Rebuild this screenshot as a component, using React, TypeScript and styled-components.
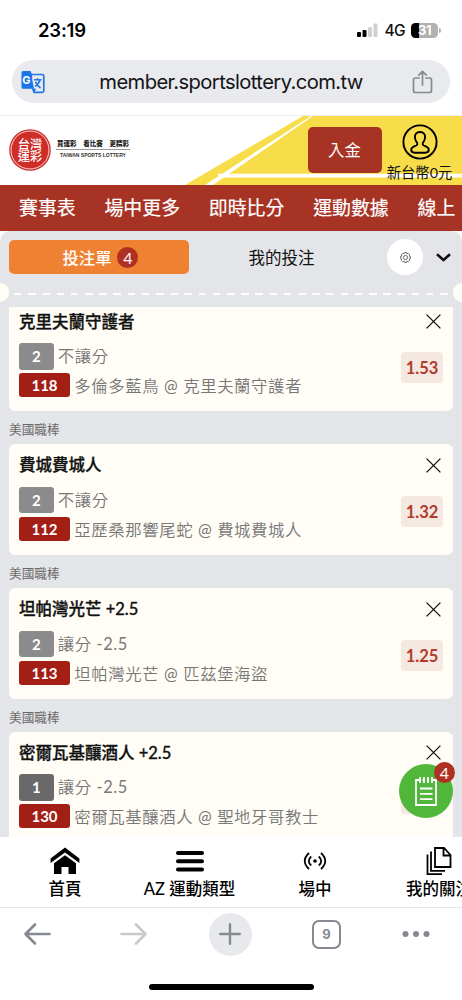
import React from "react";
import styled, { createGlobalStyle } from "styled-components";

const Global = createGlobalStyle`
  * { box-sizing: border-box; }
  body { margin: 0; background: #fff; }
`;

const Page = styled.div`
  width: 462px;
  height: 1000px;
  display: flex;
  flex-direction: column;
  overflow: hidden;
  background: #fff;
  font-family: Lato, "Noto Sans CJK TC", sans-serif;
  color: #111;
  white-space: nowrap;
  svg { display: block; flex: none; }
`;

const StatusBar = styled.div`
  height: 60px;
  padding: 0 21px 0 38px;
  display: flex;
  align-items: center;
  justify-content: space-between;
  font-family: Inter, sans-serif;
`;
const Clock = styled.span`
  font-size: 18.5px;
  font-weight: 600;
  letter-spacing: -0.2px;
  color: #000;
`;
const StatusIcons = styled.div`
  display: flex;
  align-items: center;
`;
const Network = styled.span`
  margin: 1px 6px 0 6px;
  font-size: 15.5px;
  font-weight: 500;
  letter-spacing: -0.6px;
`;
const Battery = styled.div`
  width: 27px;
  height: 15px;
  border-radius: 4.5px;
  background: linear-gradient(90deg, #000 31%, #b1b1b1 31%);
  color: #fff;
  font-size: 13px;
  font-weight: 700;
  line-height: 15px;
  text-align: center;
  letter-spacing: -0.5px;
`;
const BatteryTip = styled.div`
  width: 2px;
  height: 5px;
  margin-left: 1px;
  border-radius: 0 2px 2px 0;
  background: #b1b1b1;
`;

const AddressRow = styled.div`
  height: 56px;
  padding: 0 12px;
  border-bottom: 1px solid #ededee;
`;
const Address = styled.div`
  height: 43px;
  padding: 0 17px 0 9px;
  display: flex;
  align-items: center;
  justify-content: space-between;
  border-radius: 22px;
  background: #e9eaee;
`;
const Url = styled.span`
  margin-left: 5px;
  font-family: Inter, sans-serif;
  font-size: 20.2px;
  letter-spacing: -0.6px;
  color: #141416;
`;

const SiteHeader = styled.header`
  height: 69px;
  display: grid;
  > * { grid-area: 1 / 1; }
`;
const HeaderContent = styled.div`
  z-index: 1;
  display: flex;
  padding: 0 9px;
`;
const Tagline = styled.div`
  width: 74px;
  margin: 21px 0 0 5px;
  text-align: center;
`;
const Slogan = styled.div`
  display: flex;
  justify-content: space-between;
  padding: 0 1px;
  height: 13px;
  border-bottom: 1px solid #999;
  font-size: 6.5px;
  line-height: 13px;
  font-weight: 900;
  color: #222;
`;
const English = styled.div`
  padding-top: 1px;
  font-family: "Liberation Sans", sans-serif;
  font-size: 5px;
  line-height: 8px;
  font-weight: 700;
  color: #333;
`;
const Deposit = styled.button`
  width: 74px;
  height: 46px;
  margin: 11px 4.500px 0 auto;
  padding: 0 0 2px;
  border: 0;
  border-radius: 5px;
  background: #a73325;
  color: #fff;
  font: 16.4px Lato, "Noto Sans CJK TC", sans-serif;
`;
const Account = styled.div`
  width: 67px;
  padding-top: 8px;
  display: flex;
  flex-direction: column;
  align-items: center;
  font-size: 14.3px;
  line-height: 26px;
  color: #111;
`;

const Nav = styled.nav`
  height: 46px;
  padding-left: 19px;
  display: flex;
  gap: 28.8px;
  overflow: hidden;
  background: #a73325;
  color: #fff;
  font-size: 18.9px;
  line-height: 46px;
  font-weight: 400;
  -webkit-text-stroke: 0.2px #fff;
`;

const SlipBackdrop = styled.div`
  height: 606px;
  background: #fffdf6;
`;
const Slip = styled.section`
  height: 606px;
  overflow: hidden;
  border-radius: 10px 10px 0 0;
  background: #e4e5e8;
`;
const Tabs = styled.div`
  height: 52px;
  padding: 0 10px 0 9px;
  display: flex;
  align-items: center;
`;
const ActiveTab = styled.div`
  width: 180px;
  height: 34px;
  padding-left: 3px;
  display: flex;
  align-items: center;
  justify-content: center;
  gap: 6px;
  border-radius: 5px;
  background: #ef8232;
  color: #fff;
  font-size: 16.3px;
  line-height: 33px;
  font-weight: 500;
`;
const Count = styled.span`
  width: 21px;
  height: 21px;
  border-radius: 50%;
  background: #b03024;
  color: #fff;
  font-size: 16px;
  line-height: 21px;
  text-align: center;
  font-weight: 400;
`;
const Tab = styled.div`
  width: 185px;
  text-align: center;
  font-size: 16.5px;
`;
const Settings = styled.div`
  width: 36px;
  height: 36px;
  margin: 0 13px;
  display: grid;
  place-items: center;
  border-radius: 50%;
  background: #fff;
`;
const Perforation = styled.div`
  height: 24px;
  display: flex;
  align-items: flex-start;
`;
const Notch = styled.div<{ $right?: boolean }>`
  width: 9px;
  height: 19px;
  flex: none;
  border-radius: ${(p) => (p.$right ? "10px 0 0 10px" : "0 10px 10px 0")};
  background: #fffdf6;
`;
const Dashes = styled.div`
  flex: 1;
  height: 2px;
  margin: 10px 4px 0 5px;
  background: repeating-linear-gradient(90deg, #fffdf6 0 7.5px, transparent 7.5px 14.2px);
`;

const List = styled.div`
  height: 530px;
  padding: 0 9px;
  display: flex;
  flex-direction: column;
  justify-content: flex-start;
  overflow: hidden;
`;
const Bet = styled.article<{ $first?: boolean }>`
  flex: none;
  height: 110.4px;
  margin-top: ${(p) => (p.$first ? "-6.4px" : "0")};
  padding: 8px 10px 0;
  border-radius: 6px;
  background: #fffdf6;
`;
const League = styled.div`
  flex: none;
  height: 33.4px;
  font-size: 12.7px;
  line-height: 37px;
  color: #696969;
`;
const BetTitle = styled.div`
  height: 34.5px;
  display: flex;
  justify-content: space-between;
  font-size: 16.5px;
  line-height: 27px;
  font-weight: 500;
  -webkit-text-stroke: 0.3px #111;
  color: #111;
  svg { margin: 5.500px 2.500px 0 0; }
`;
const BetBody = styled.div`
  display: flex;
  justify-content: space-between;
`;
const BetLine = styled.div`
  height: 30px;
  display: flex;
  gap: 4.300px;
  font-family: Lato, "Noto Sans CJK TC DemiLight", "Noto Sans CJK TC", sans-serif;
  font-size: 16.4px;
  line-height: 26px;
  letter-spacing: 0.6px;
  color: #777;
`;
const Tag = styled.span<{ $tone: string; $wide?: boolean }>`
  width: ${(p) => (p.$wide ? 51 : 34.5)}px;
  height: ${(p) => (p.$wide ? 24 : 26.5)}px;
  border-radius: 3px;
  background: ${(p) => p.$tone};
  color: #fff;
  font-size: 15px;
  line-height: ${(p) => (p.$wide ? 24 : 26)}px;
  font-weight: 700;
  letter-spacing: 0;
  text-align: center;
`;
const Odds = styled.div`
  width: 42px;
  height: 31px;
  margin-top: 9px;
  border-radius: 4px;
  background: #f5e8e1;
  color: #b03b2c;
  font-size: 16.5px;
  line-height: 32px;
  font-weight: 700;
  text-align: center;
`;

const FloatingSlip = styled.button`
  position: absolute;
  left: 399px;
  top: 764px;
  width: 54px;
  height: 54px;
  padding: 0;
  display: grid;
  place-items: center;
  border: 0;
  border-radius: 50%;
  background: #51b73b;
`;
const FloatingCount = styled(Count)`
  position: absolute;
  left: 35px;
  top: -2px;
  font-family: Lato, sans-serif;
`;

const BottomNav = styled.nav`
  height: 71px;
  display: flex;
  border-bottom: 1px solid #e7e7e8;
  overflow: hidden;
  background: #fff;
  flex: none;
`;
const BottomItem = styled.div<{ $width: number }>`
  width: ${(p) => p.$width}px;
  flex: none;
  display: flex;
  flex-direction: column;
  align-items: center;
  font-size: 16.5px;
  line-height: 26px;
  font-weight: 500;
  color: #000;
  svg { margin: 9px 0 0; }
`;
const BrowserBar = styled.div`
  height: 52px;
  padding-left: 23px;
  display: flex;
  align-items: center;
  gap: 60.500px;
  svg:first-child { margin-right: 8.500px; }
`;
const NewTab = styled.div`
  width: 43px;
  height: 43px;
  flex: none;
  display: grid;
  place-items: center;
  border-radius: 50%;
  background: #e8e9ed;
  svg:first-child { margin: 0; }
`;
const TabCount = styled.div`
  width: 29px;
  height: 29px;
  flex: none;
  border: 2px solid #858a90;
  border-radius: 7px;
  color: #858a90;
  font: 700 13px/25px Inter, sans-serif;
  text-align: center;
`;
const HomeIndicator = styled.div`
  width: 165px;
  height: 6px;
  margin: 24px 0 0 149px;
  border-radius: 3px;
  background: #000;
`;

const LogoText = styled.text`
  font: 500 12.2px "Noto Sans CJK TC", sans-serif;
  fill: #fff;
`;
const TranslateText = styled.text`
  font: 700 11px Inter, sans-serif;
  fill: #fff;
`;

const Close = () => (
  <svg width="15" height="15" viewBox="0 0 15 15" stroke="#111" strokeWidth="1.3">
    <path d="M.6 .6 14.4 14.4M14.4 .6 .6 14.4" />
  </svg>
);

const bets = [
  { title: "克里夫蘭守護者", pick: "2", type: "不讓分", no: "118", match: "多倫多藍鳥 @ 克里夫蘭守護者", odds: "1.53", tone: "#8b8b8b" },
  { title: "費城費城人", pick: "2", type: "不讓分", no: "112", match: "亞歷桑那響尾蛇 @ 費城費城人", odds: "1.32", tone: "#8b8b8b" },
  { title: "坦帕灣光芒 +2.5", pick: "2", type: "讓分 -2.5", no: "113", match: "坦帕灣光芒 @ 匹茲堡海盜", odds: "1.25", tone: "#8b8b8b" },
  { title: "密爾瓦基釀酒人 +2.5", pick: "1", type: "讓分 -2.5", no: "130", match: "密爾瓦基釀酒人 @ 聖地牙哥教士", odds: "", tone: "#696969" },
];

export default function App() {
  return (
    <Page>
      <Global />
      <StatusBar>
        <Clock>23:19</Clock>
        <StatusIcons>
          <svg width="21" height="14" viewBox="0 0 21 14">
            <rect x="0" y="9" width="4" height="5" rx="1" />
            <rect x="5.5" y="7" width="4" height="7" rx="1" />
            <rect x="11" y="4" width="4" height="10" rx="1" fill="#d0d0d0" />
            <rect x="16.5" y="0.5" width="4" height="13.5" rx="1" fill="#d0d0d0" />
          </svg>
          <Network>4G</Network>
          <Battery>31</Battery>
          <BatteryTip />
        </StatusIcons>
      </StatusBar>

      <AddressRow>
        <Address>
          <svg width="24" height="24" viewBox="0 0 24 24">
            <path d="M9 4.500h12.200c.9 0 1.600.7 1.600 1.600v14.600c0 .9-.7 1.600-1.600 1.600H13L9 4.500Z" fill="#e9eaee" stroke="#2377e4" strokeWidth="1.7" />
            <path d="M2 1h7.600q1 2.500 1.600 5v12.800H2a1.500 1.500 0 0 1-1.500-1.500V2.500A1.500 1.500 0 0 1 2 1Z" fill="#1a73e8" />
            <path d="m10.500 18.800 2.700 3.500 2-3.500Z" fill="#1a73e8" />
            <path d="M13 9.800h7.500M16.600 8.300v1.500M19 9.800c-.6 2.500-2.800 5-5 6.500M14.500 11.800c1 2.200 3 4.700 5 6.200" fill="none" stroke="#2377e4" strokeWidth="1.600" />
            <TranslateText x="1.300" y="14">G</TranslateText>
          </svg>
          <Url>member.sportslottery.com.tw</Url>
          <svg width="21" height="24" viewBox="0 0 21 24" fill="none" stroke="#868a90" strokeWidth="1.700" strokeLinejoin="round" strokeLinecap="round">
            <path d="M7 8H3.500Q1.500 8 1.500 10v10.500q0 2 2 2h14q2 0 2-2V10q0-2-2-2H14M10.500 15V1.500M6.700 5.200l3.800-3.800 3.800 3.800" />
          </svg>
        </Address>
      </AddressRow>

      <SiteHeader>
        <svg width="462" height="69" viewBox="0 0 462 69">
          <path d="M303 0H462V69H185Z" fill="#f8dd4b" />
          <path d="M311 0h2L213 69h-8ZM218 57.800H462v3.600H218Z" fill="#fff" />
        </svg>
        <HeaderContent>
          <svg width="42" height="69" viewBox="0 0 42 69">
            <circle cx="21" cy="34" r="20.800" fill="#cf2d28" />
            <circle cx="21" cy="34" r="19" fill="none" stroke="#fff" strokeWidth=".8" />
            <LogoText x="8.800" y="32.500">台灣</LogoText>
            <LogoText x="8.800" y="44.800">運彩</LogoText>
          </svg>
          <Tagline>
            <Slogan><span>買運彩</span><span>看比賽</span><span>更精彩</span></Slogan>
            <English>TAIWAN SPORTS LOTTERY</English>
          </Tagline>
          <Deposit>入金</Deposit>
          <Account>
            <svg width="36" height="36" viewBox="0 0 36 36" fill="none" stroke="#000">
              <circle cx="18" cy="18" r="16.600" strokeWidth="1.900" />
              <path d="M18 8c-3.700 0-5.300 2.400-5.100 5.300.1 2.300.8 3.600 1.900 5 .9 1.200.7 2.500-.6 3.200-2.200 1.100-5 1.400-5 4.300 0 2.200 1.600 2.900 3.500 2.900h10.600c1.900 0 3.500-.7 3.500-2.900 0-2.900-2.800-3.200-5-4.300-1.300-.7-1.500-2-.6-3.200 1.100-1.400 1.800-2.700 1.900-5C23.300 10.400 21.700 8 18 8Z" strokeWidth="1.900" />
            </svg>
            新台幣0元
          </Account>
        </HeaderContent>
      </SiteHeader>

      <Nav><span>賽事表</span><span>場中更多</span><span>即時比分</span><span>運動數據</span><span>線上</span></Nav>

      <SlipBackdrop>
        <Slip>
          <Tabs>
            <ActiveTab>投注單<Count>4</Count></ActiveTab>
            <Tab>我的投注</Tab>
            <Settings>
              <svg width="11" height="11" viewBox="0 0 24 24" fill="none" stroke="#555" strokeWidth="1.900">
                <path d="m10 1-1 3-3-1-3 3 1 3-3 1v4l3 1-1 3 3 3 3-1 1 3h4l1-3 3 1 3-3-1-3 3-1v-4l-3-1 1-3-3-3-3 1-1-3Z" />
                <circle cx="12" cy="12" r="4.500" />
              </svg>
            </Settings>
            <svg width="15" height="10" viewBox="0 0 15 10" fill="none" stroke="#111" strokeWidth="2.600">
              <path d="M1 2.200 7.500 8 14 2.200" />
            </svg>
          </Tabs>
          <Perforation><Notch /><Dashes /><Notch $right /></Perforation>
          <List>
            {bets.map((b, i) => (
              <React.Fragment key={b.no}>
                {i > 0 && <League>美國職棒</League>}
                <Bet $first={i === 0}>
                  <BetTitle>{b.title}<Close /></BetTitle>
                  <BetBody>
                    <div>
                      <BetLine><Tag $tone={b.tone}>{b.pick}</Tag>{b.type}</BetLine>
                      <BetLine><Tag $wide $tone="#a31f15">{b.no}</Tag>{b.match}</BetLine>
                    </div>
                    <Odds>{b.odds}</Odds>
                  </BetBody>
                </Bet>
              </React.Fragment>
            ))}
          </List>
        </Slip>
      </SlipBackdrop>

      <BottomNav>
        <BottomItem $width={130}>
          <svg width="30" height="30" viewBox="0 0 30 30">
            <path d="M.6 17v-4.500L15 1.500l14.400 11V17L15 6.500Z" />
            <path d="M4 17.300 15 9.200l11 8.100V28h-7.500v-7h-7v7H4Z" />
          </svg>
          首頁
        </BottomItem>
        <BottomItem $width={119}>
          <svg width="30" height="30" viewBox="0 0 30 30" stroke="#000" strokeWidth="4" strokeLinecap="round">
            <path d="M3 7h24M3 15.200h24M3 23.400h24" />
          </svg>
          AZ 運動類型
        </BottomItem>
        <BottomItem $width={132}>
          <svg width="24" height="30" viewBox="0 0 24 30" fill="none" stroke="#000" strokeWidth="1.800">
            <path d="M6 7Q-2.500 15 6 23M18 7q8.500 8 0 16M8.200 10.500q-4.800 4.500 0 9M15.800 10.500q4.800 4.500 0 9" />
            <circle cx="12" cy="15" r="1.800" fill="#000" stroke="none" />
          </svg>
          場中
        </BottomItem>
        <BottomItem $width={116}>
          <svg width="26" height="30" viewBox="0 0 26 30" fill="none" stroke="#000" strokeWidth="1.800">
            <path d="M9 2h9l6.500 7v12H9ZM17.500 2v7.500h7M5 5.500v19.300h14M1.500 8.500v19.700H16" />
          </svg>
          我的關注
        </BottomItem>
      </BottomNav>

      <BrowserBar>
        <svg width="28" height="24" viewBox="0 0 28 24" fill="none" stroke="#858a90" strokeWidth="2.600" strokeLinecap="round" strokeLinejoin="round"><path d="M26.500 12H2.500M12 2.500 2.500 12l9.500 9.500" /></svg>
        <svg width="28" height="24" viewBox="0 0 28 24" fill="none" stroke="#c9c9c9" strokeWidth="2.600" strokeLinecap="round" strokeLinejoin="round"><path d="M1.500 12H25.500M16 2.500l9.500 9.500-9.500 9.500" /></svg>
        <NewTab>
          <svg width="22" height="22" viewBox="0 0 22 22" stroke="#858a90" strokeWidth="2.400" strokeLinecap="round"><path d="M1.200 11h19.600M11 1.200v19.600" /></svg>
        </NewTab>
        <TabCount>9</TabCount>
        <svg width="28" height="8" viewBox="0 0 28 8" fill="#858a90"><circle cx="3.500" cy="4" r="3" /><circle cx="14" cy="4" r="3" /><circle cx="24.500" cy="4" r="3" /></svg>
      </BrowserBar>
      <HomeIndicator />

      <FloatingSlip>
        <svg width="24" height="31" viewBox="0 0 24 31" fill="none" stroke="#fff" strokeWidth="1.800">
          <path d="M5 4H2v25h20V4h-3M8.500 4h1.500M13 4h2M6 1v6M10 1v6M14 1v6M18 1v6M6 12.500h12.500M6 17.800h12.500M6 23.100h12.500" />
        </svg>
        <FloatingCount>4</FloatingCount>
      </FloatingSlip>
    </Page>
  );
}
